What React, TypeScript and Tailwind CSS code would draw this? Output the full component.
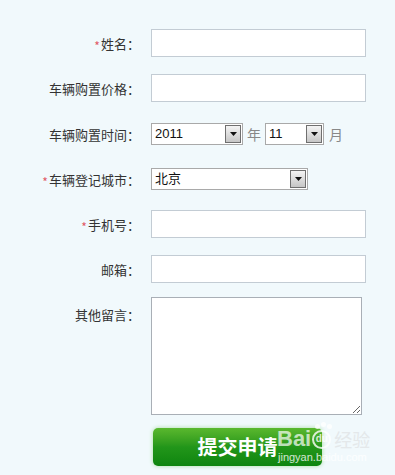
const FONT = { fontFamily: '"Noto Sans CJK SC", "Liberation Sans", sans-serif' };

function Label({ text, required }: { text: string; required?: boolean }) {
  return (
    <div className="w-[140px] shrink-0 text-right text-[13px] leading-none text-[#333]">
      {required && <span className="relative top-[2px] text-[12px] text-[#e05a66] mr-[1px]">*</span>}
      {text}：
    </div>
  );
}

function TextBox() {
  return <input className="w-[215px] h-[28px] border border-[#c3ccd4] bg-white outline-none px-1 text-[13px]" />;
}

function Select({ value, width }: { value: string; width: string }) {
  return (
    <div className={`${width} h-[22px] border border-[#a9a9a9] bg-white flex items-center justify-between pl-[3px] pr-[1px]`}>
      <span className="text-[13px] text-[#111]" style={{ fontFamily: '"Liberation Sans", "Noto Sans CJK SC", sans-serif' }}>
        {value}
      </span>
      <div className="w-[16px] h-[18px] border border-[#6f6f6f] bg-gradient-to-b from-[#f4f4f4] to-[#c6c6c6] flex items-center justify-center">
        <svg width="7" height="4" viewBox="0 0 7 4">
          <path d="M0 0h7L3.5 4z" fill="#111" />
        </svg>
      </div>
    </div>
  );
}

export default function App() {
  return (
    <div className="w-[395px] h-[475px] bg-[#f1f9fc] relative overflow-hidden" style={FONT}>
      <div className="flex flex-col pt-[29px]">
        <div className="flex items-center gap-[11px]">
          <Label text="姓名" required />
          <TextBox />
        </div>
        <div className="flex items-center gap-[11px] mt-[17px]">
          <Label text="车辆购置价格" />
          <TextBox />
        </div>
        <div className="flex items-center gap-[11px] mt-[21px]">
          <Label text="车辆购置时间" />
          <div className="flex items-center">
            <Select value="2011" width="w-[92px]" />
            <span className="text-[14px] text-[#888] mx-[4px]">年</span>
            <Select value="11" width="w-[59px]" />
            <span className="text-[14px] text-[#888] ml-[5px]">月</span>
          </div>
        </div>
        <div className="flex items-center gap-[11px] mt-[23px]">
          <Label text="车辆登记城市" required />
          <Select value="北京" width="w-[157px]" />
        </div>
        <div className="flex items-center gap-[11px] mt-[20px]">
          <Label text="手机号" required />
          <TextBox />
        </div>
        <div className="flex items-center gap-[11px] mt-[17px]">
          <Label text="邮箱" />
          <TextBox />
        </div>
        <div className="flex items-start gap-[11px] mt-[14px]">
          <div className="pt-[11px]">
            <Label text="其他留言" />
          </div>
          <textarea className="w-[211px] h-[118px] border border-[#a9afb6] bg-white outline-none" />
        </div>
        <div className="ml-[153px] mt-[13px]">
          <button className="w-[169px] h-[38px] rounded-[5px] bg-gradient-to-b from-[#5ab82e] via-[#22961a] to-[#0d850f] text-white text-[20px] font-bold shadow-[0_0_4px_#a8dca0]">
            提交申请
          </button>
        </div>
      </div>

      <div className="absolute left-[277px] top-[428px] pointer-events-none">
        <div className="flex items-center">
          <span className="text-[22px] font-bold text-white/70 leading-none" style={{ fontFamily: '"Liberation Sans", sans-serif' }}>
            Bai
          </span>
          <div className="relative w-[19px] h-[19px] rounded-full border-2 border-white/80 ml-[1px] flex items-center justify-center">
            <span className="text-[10px] font-bold text-white/80 leading-none" style={{ fontFamily: '"Liberation Sans", sans-serif' }}>
              du
            </span>
            <span className="absolute -top-[8px] left-[1px] w-[5px] h-[5px] rounded-full bg-white/80" />
            <span className="absolute -top-[10px] left-[7px] w-[5px] h-[5px] rounded-full bg-white/80" />
            <span className="absolute -top-[8px] left-[13px] w-[5px] h-[5px] rounded-full bg-white/80" />
          </div>
          <span className="text-[18px] text-[#e4e8ea] ml-[3px] leading-none">经验</span>
        </div>
        <div className="text-[11px] text-white/80 leading-none mt-[2px] ml-[1px]" style={{ fontFamily: '"Liberation Sans", sans-serif' }}>
          jingyan.baidu.com
        </div>
      </div>
    </div>
  );
}
